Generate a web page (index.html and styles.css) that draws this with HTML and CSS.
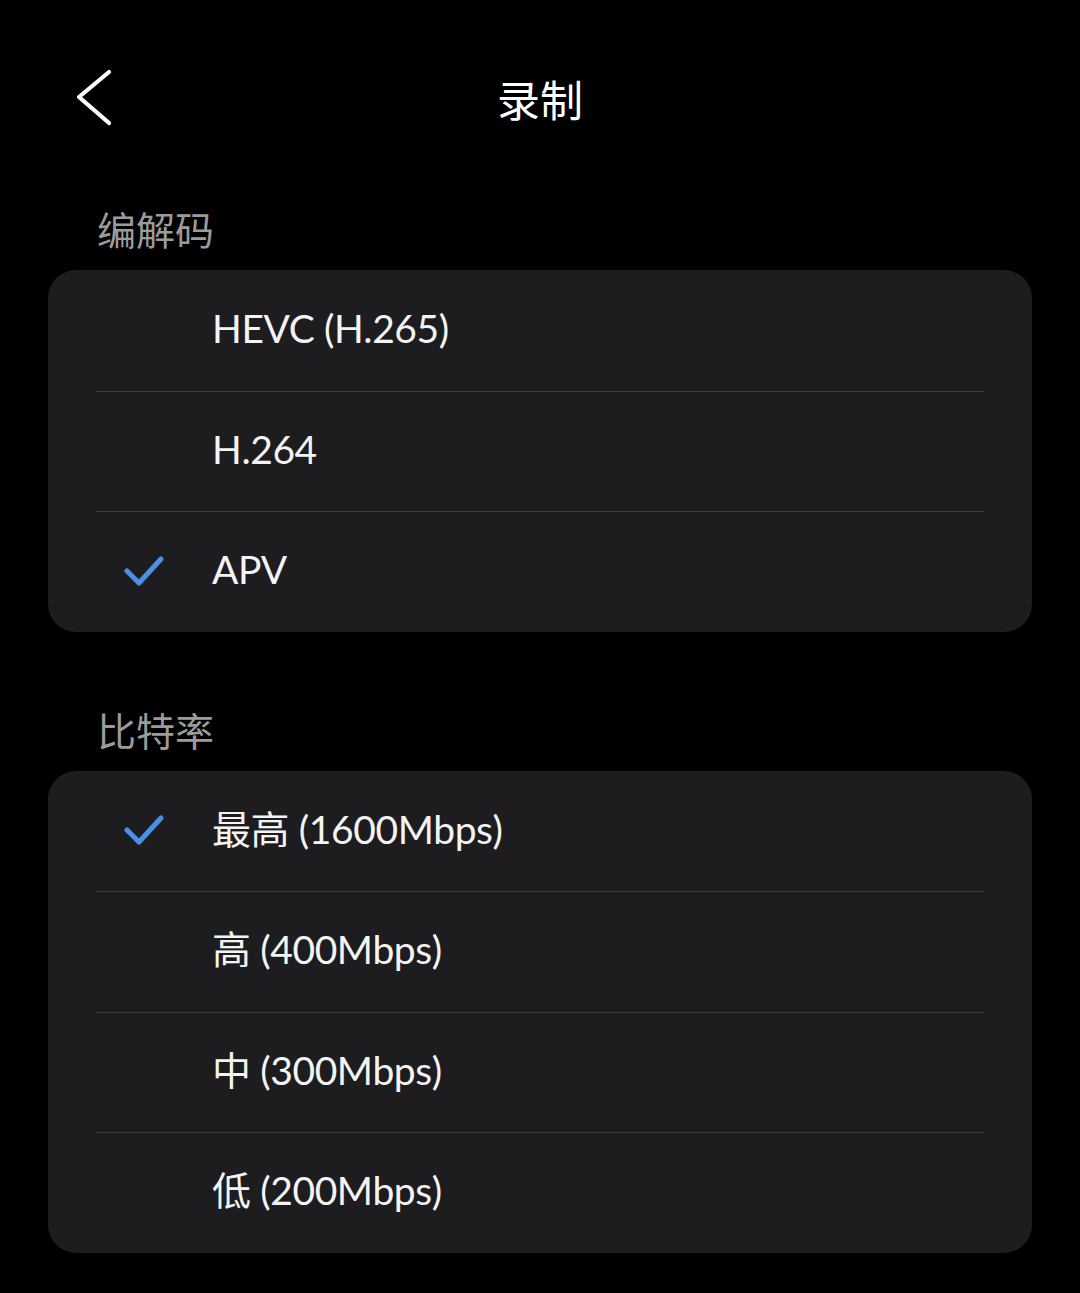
FILE: index.html
```html
<!DOCTYPE html>
<html lang="zh-CN">
<head>
    <meta charset="UTF-8">
    <meta name="viewport" content="width=device-width, initial-scale=1.0">
    <title>录制</title>
    <link rel="stylesheet" href="styles.css">
</head>
<body>

    <header class="top-bar">
        <div class="top-left">
            <button class="back-btn" aria-label="返回">
                <svg width="40" height="60" viewBox="0 0 40 60">
                    <polyline points="33,3 3,28 33,54" fill="none" stroke="#fff" stroke-width="4.2" stroke-linecap="round" stroke-linejoin="round"/>
                </svg>
            </button>
        </div>
        <h1 class="title">录制</h1>
        <div></div>
    </header>

    <section class="section">
        <h2 class="section-label">编解码</h2>
        <ul class="card">
            <li class="row"><span class="check"></span><span class="row-text">HEVC (H.265)</span></li>
            <li class="row"><span class="check"></span><span class="row-text">H.264</span></li>
            <li class="row selected">
                <span class="check">
                    <svg width="40" height="34" viewBox="0 0 40 34"><polyline points="3,17 15,29 37,5" fill="none" stroke="#4a8fe8" stroke-width="5" stroke-linecap="round" stroke-linejoin="round"/></svg>
                </span>
                <span class="row-text">APV</span>
            </li>
        </ul>
    </section>

    <section class="section">
        <h2 class="section-label">比特率</h2>
        <ul class="card">
            <li class="row selected">
                <span class="check">
                    <svg width="40" height="34" viewBox="0 0 40 34"><polyline points="3,17 15,29 37,5" fill="none" stroke="#4a8fe8" stroke-width="5" stroke-linecap="round" stroke-linejoin="round"/></svg>
                </span>
                <span class="row-text">最高 (1600Mbps)</span>
            </li>
            <li class="row"><span class="check"></span><span class="row-text">高 (400Mbps)</span></li>
            <li class="row"><span class="check"></span><span class="row-text">中 (300Mbps)</span></li>
            <li class="row"><span class="check"></span><span class="row-text">低 (200Mbps)</span></li>
        </ul>
    </section>

</body>
</html>
```

FILE: styles.css
```css
* {
    margin: 0;
    padding: 0;
    box-sizing: border-box;
}

body {
    background: #000;
    color: #f2f2f2;
    font-family: Lato, "Noto Sans CJK SC", sans-serif;
    width: 1080px;
    min-height: 1293px;
}

/* Barra superior */
.top-bar {
    height: 196px;
    display: grid;
    grid-template-columns: 1fr auto 1fr;
    align-items: center;
}

.top-left {
    padding-left: 76px;
    display: flex;
    align-items: center;
}

.back-btn {
    background: none;
    border: none;
    width: 40px;
    height: 60px;
    display: flex;
    margin-top: 2px;
}

.title {
    font-family: "Noto Sans CJK SC", sans-serif;
    font-size: 43px;
    font-weight: 400;
    line-height: 50px;
    color: #fff;
}

/* Secoes */
.section {
    padding-top: 13px;
}

.section + .section {
    margin-top: 65px;
}

.section-label {
    font-family: "Noto Sans CJK SC", sans-serif;
    font-size: 39px;
    font-weight: 400;
    line-height: 38px;
    color: #9b9b9b;
    padding-left: 97px;
    margin-bottom: 23px;
}

.card {
    list-style: none;
    margin: 0 48px;
    background: #1d1d1f;
    border-radius: 28px;
    overflow: hidden;
}

.row {
    height: 120.5px;
    display: flex;
    align-items: center;
    padding-left: 76px;
    padding-bottom: 4px;
    position: relative;
}

.row + .row::before {
    content: "";
    position: absolute;
    top: 0;
    left: 48px;
    right: 48px;
    height: 1px;
    background: #3c3c3e;
}

.check {
    width: 40px;
    height: 34px;
    margin-top: 3px;
    margin-right: 48px;
    display: flex;
}

.row-text {
    font-size: 39px;
    line-height: 48px;
    color: #f4f4f4;
    letter-spacing: -0.4px;
}
```
